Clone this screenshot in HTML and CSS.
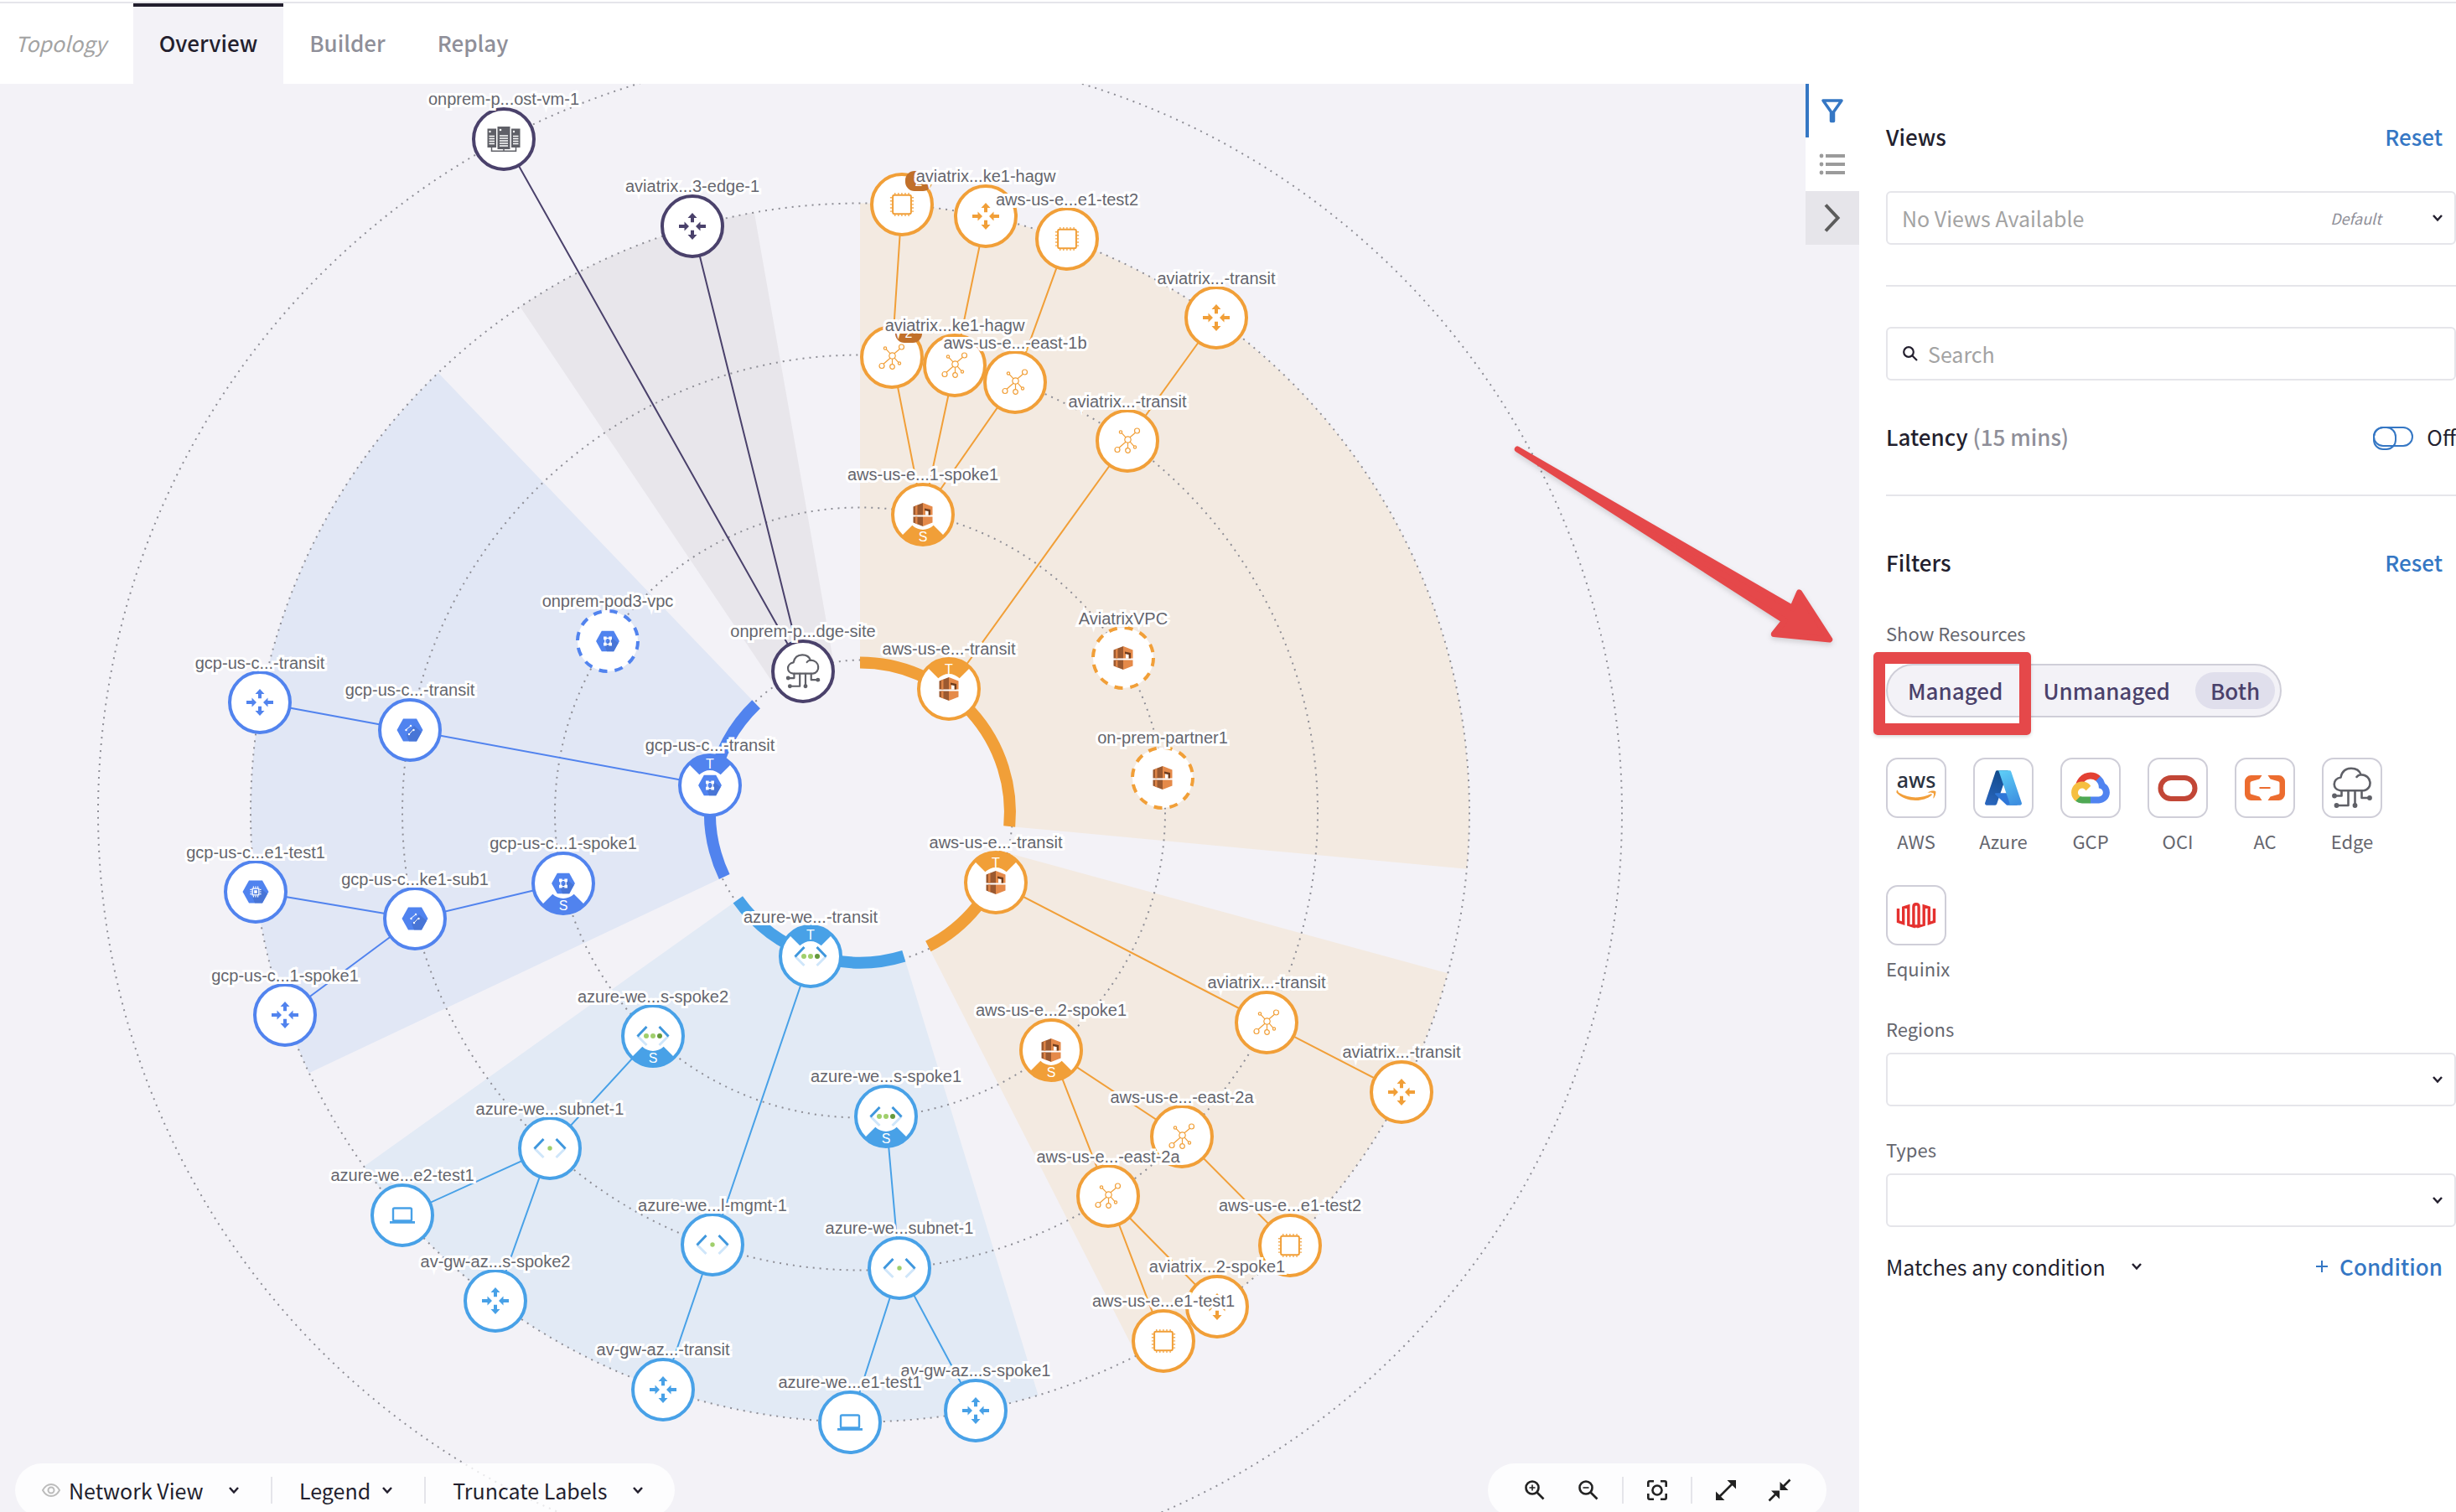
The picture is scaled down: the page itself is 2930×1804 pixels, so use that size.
FILE: index.html
```html
<!DOCTYPE html>
<html lang="en">
<head>
<meta charset="utf-8">
<meta name="viewport" content="width=device-width, initial-scale=1">
<title>Topology – Overview</title>
<link rel="stylesheet" href="styles.css">
</head>
<body>

<svg class="sprite" aria-hidden="true">
  <defs>
    <linearGradient id="az-dark" x1="0.6" y1="0" x2="0.3" y2="1"><stop offset="0" stop-color="#114a8b"/><stop offset="1" stop-color="#2a66bd"/></linearGradient>
    <linearGradient id="az-light" x1="0.3" y1="0" x2="0.7" y2="1"><stop offset="0" stop-color="#5ccbf6"/><stop offset="1" stop-color="#3d8fe0"/></linearGradient>
  </defs>
  <symbol id="gateway" viewBox="-20 -20 40 40">
    <path fill="currentColor" d="M0-16 5.500-10H2V-4.700H-2V-10H-5.500ZM0 16 5.500 10H2V4.700H-2V10H-5.500ZM-4 0-9.500-5.500V-2H-16V2H-9.500V5.500ZM4 0 9.500-5.500V-2H16V2H9.500V5.500Z"/>
  </symbol>
  <symbol id="chip" viewBox="-20 -20 40 40">
    <path fill="none" stroke="currentColor" stroke-width="2.600" stroke-dasharray="1.400 2.700" opacity=".85" d="M-9-12.800H9M-9 12.800H9M-12.800-9V9M12.800-9V9"/>
    <rect x="-10.900" y="-11.200" width="21.800" height="22.400" rx="2" fill="#fff" stroke="currentColor" stroke-width="2"/>
  </symbol>
  <symbol id="subnet" viewBox="-20 -20 40 40">
    <g fill="none" stroke="currentColor" stroke-width="1.200">
      <circle cx="0.500" cy="-1.500" r="3.700"/><circle cx="11.500" cy="-12" r="3"/><circle cx="-8" cy="-10.500" r="1.700"/>
      <circle cx="-12" cy="10.500" r="3"/><circle cx="0.500" cy="11.500" r="2.800"/><circle cx="9" cy="7.500" r="1.600"/>
      <path d="M3-4.200 9.500-9.800M-2-4.200-6.800-9.300M-2 1.200-10 8.300M.5 2.200V8.700M3.200 1.200 7.800 6.300"/>
    </g>
  </symbol>
  <symbol id="aws-vpc" viewBox="-20 -20 40 40">
    <path fill="#9b5930" d="M0-14V.5H-11.500V-9.500ZM-11.500 2.500H0V14L-11.500 9.500Z"/>
    <path fill="#dd8447" d="M-9-10.500-6.500-11.500V.5H-9ZM-9 2.500H-6.500V11.500L-9 10.500Z"/>
    <path fill="#e58a4a" d="M0-14 11.500-9.500V.5H0ZM0 2.500H11.500V9.500L0 14Z"/>
    <path fill="#6f3d1e" d="M2-7.500 9-6V.5H6.500V-3.500L2-5Z"/>
    <path fill="#fff" d="M3-4.500 6.500-4V.5H3Z"/>
  </symbol>
  <symbol id="hexagon" viewBox="-20 -20 40 40">
    <path fill="#5083ef" d="M-8-13.500H8L15.500 0 8 13.500H-8L-15.500 0Z"/>
    <path fill="#4672d0" opacity=".8" d="M5-5 14 2.500 8 13.500H-1L-4 6Z"/>
  </symbol>
  <symbol id="gcp-vpc" viewBox="-20 -20 40 40">
    <use href="#hexagon" x="-20" y="-20" width="40" height="40"/>
    <path fill="#fff" d="M-5.500-6H-1.500V-2H-5.500ZM1.500-6H5.500V-2H1.500ZM-5.500 2H-1.500V6H-5.500ZM1.500 2H5.500V6H1.500Z"/>
    <path fill="none" stroke="#fff" stroke-width="1.400" d="M-3.500-3V3M3.500-3V3M-2-4H2M-2 4H2"/>
  </symbol>
  <symbol id="gcp-subnet" viewBox="-20 -20 40 40">
    <use href="#hexagon" x="-20" y="-20" width="40" height="40"/>
    <g fill="none" stroke="#fff" stroke-width="1"><path d="M-4-1 .5-4.500M-.5 4.500 4-.5"/></g>
    <g fill="#fff"><circle cx="-4.500" cy="0" r="1.200"/><circle cx="1" cy="-5" r="1.200"/><circle cx="-1" cy="5" r="1.200"/><circle cx="4.500" cy="0" r="1.200"/></g>
  </symbol>
  <symbol id="gcp-vm" viewBox="-20 -20 40 40">
    <use href="#hexagon" x="-20" y="-20" width="40" height="40"/>
    <rect x="-3.800" y="-3.800" width="7.600" height="7.600" fill="none" stroke="#fff" stroke-width="1.300"/>
    <rect x="-1.800" y="-1.800" width="3.600" height="3.600" fill="#fff"/>
    <path fill="none" stroke="#fff" stroke-width="2" stroke-dasharray="1.200 1.400" d="M-3.200-5.600H3.500M-3.200 5.600H3.500M-5.600-3.200V3.500M5.600-3.200V3.500"/>
  </symbol>
  <symbol id="brackets" viewBox="-24 -20 48 40">
    <g fill="none" stroke-width="3"><path stroke="#cfe6fa" d="M-18.500 0-7.500 11M18.500 0 7.500 11"/><path stroke="#3f97dd" d="M-7.500-11-18.500.5M7.500-11 18.500.5"/></g>
  </symbol>
  <symbol id="az-vnet" viewBox="-24 -20 48 40">
    <use href="#brackets" x="-24" y="-20" width="48" height="40"/>
    <circle cx="-8" r="3" fill="#a0cf6c"/><circle r="3" fill="#a0cf6c"/><circle cx="8" r="3" fill="#66993d"/>
  </symbol>
  <symbol id="az-subnet" viewBox="-24 -20 48 40">
    <use href="#brackets" x="-24" y="-20" width="48" height="40"/>
    <circle r="2.700" fill="#a0cf6c"/>
  </symbol>
  <symbol id="laptop" viewBox="-20 -20 40 40">
    <rect x="-11" y="-8.500" width="22" height="15" rx="1.500" fill="none" stroke="currentColor" stroke-width="2.400"/>
    <path fill="currentColor" d="M-15 7H15V9.800H-15Z"/>
  </symbol>
  <symbol id="servers" viewBox="-24 -20 48 40">
    <path fill="#5f6067" d="M-19.500-12.500H-9V10H-19.500ZM-7.500-15H7.500V12H-7.500ZM9-12.500H19.500V10H9Z"/>
    <path fill="none" stroke="#fff" stroke-width="1.300" d="M-17.500-3.500H-11M-17.500-.5H-11M-17.500 2.500H-11M-17.500 5.500H-11M-5-4H5M-5-1H5M-5 2H5M-5 5H5M-5 8H5M11-3.500H17.500M11-.5H17.500M11 2.500H17.500M11 5.500H17.500"/>
    <path fill="none" stroke="#5f6067" stroke-width="1.500" d="M-14.500 10V14.200H14.500V10M0 12V14"/>
    <g fill="#fff"><circle cx="-16.500" cy="-9" r="1.200"/><circle cx="-4" cy="-11" r="1.300"/><circle cx="12" cy="-9" r="1.200"/></g>
  </symbol>
  <symbol id="edge-cloud" viewBox="-26 -26 52 52">
    <g fill="none" stroke="#5f6067" stroke-width="2.600" stroke-linejoin="round" stroke-linecap="round">
      <path d="M-14 3.200C-24 2-23.500-11-13.500-12.500-12-20-7-23.300-1-23.300 5-23.300 9-20.500 10.500-15.800 24-15.500 25 1.500 14 3.200ZM10.500-15.800C8.500-15.600 6.500-14.500 5.500-13"/>
      <path d="M-12.500 3.500V9.500H-20M-4.500 3.500V21H-18M3.500 3.500V20M11.500 3.500V12H20"/>
    </g>
    <g fill="#5f6067"><circle cx="-21" cy="9.500" r="2.900"/><circle cx="-18.500" cy="21" r="2.900"/><circle cx="3.500" cy="21" r="2.900"/><circle cx="21" cy="12" r="2.900"/></g>
  </symbol>
  <symbol id="role-t" viewBox="-40 -40 80 80">
    <path fill="currentColor" d="M-12.700-12.700A18 18 0 0 1 12.700-12.700L26-26A37 37 0 0 0-26-26Z"/>
  </symbol>
  <symbol id="role-s" viewBox="-40 -40 80 80">
    <path fill="currentColor" d="M-12.700 12.700A18 18 0 0 0 12.700 12.700L26 26A37 37 0 0 1-26 26Z"/>
  </symbol>
  <symbol id="chevron" viewBox="0 0 16 16"><path fill="none" stroke="currentColor" stroke-width="2.500" d="M3 5 8 10.500 13 5"/></symbol>
</svg>

<header class="topbar">
  <nav class="tabs" aria-label="Topology">
    <span class="tabs-title">Topology</span>
    <a class="tab tab-active" href="#overview" aria-current="page">Overview</a>
    <a class="tab" href="#builder">Builder</a>
    <a class="tab" href="#replay">Replay</a>
  </nav>
</header>

<div class="workspace">
<main class="canvas">
<svg class="graph" viewBox="0 100 2218 1704" preserveAspectRatio="xMinYMin meet" role="img" aria-label="Network topology">
  <!-- region wedges, centre 1026,969 -->
  <g transform="translate(1026 969.500)">
    <path class="zone-aws" d="M0-179V-727A727 727 0 0 1 723.900 67.200L178.200 16.500A179 179 0 0 0 0-179Z"/>
    <path class="zone-aws" d="M172.700 47.200 701.200 191.800A727 727 0 0 1 330 647.800L81.300 159.500A179 179 0 0 0 172.700 47.200Z"/>
    <path class="zone-azure" d="M52.300 171.200 212.600 695.200A727 727 0 0 1-591.900 422.200L-145.700 103.900A179 179 0 0 0 52.300 171.200Z"/>
    <path class="zone-gcp" d="M-161.800 76.500-657.300 310.700A727 727 0 0 1-503.200-524.700L-123.900-129.200A179 179 0 0 0-161.800 76.500Z"/>
    <path class="zone-edge" d="M-99.800-148.600-405.500-603.400A727 727 0 0 1-126.200-716L-31.100-176.300A179 179 0 0 0-99.800-148.600Z"/>
    <g class="rings"><circle r="182"/><circle r="364"/><circle r="546"/><circle r="727"/><circle r="909"/></g>
    <g class="arcs">
      <path class="aws" d="M0-179A179 179 0 0 1 178.200 16.500"/>
      <path class="aws" d="M172.700 47.200A179 179 0 0 1 81.300 159.500"/>
      <path class="azure" d="M52.300 171.200A179 179 0 0 1-145.700 103.900"/>
      <path class="gcp" d="M-161.800 76.500A179 179 0 0 1-123.900-129.200"/>
    </g>
  </g>

  <g class="links">
    <path class="edge" d="M601 166 958 801 826 270"/>
    <path class="aws" d="M1076 244 1064 426 1101 614 1139 436 1176 258M1101 614 1211 456 1273 285M1451 379 1345 526 1132 822"/>
    <path class="aws" d="M1188 1053 1511 1220 1672 1303M1254 1253 1410 1356 1539 1486M1254 1253 1322 1427 1388 1600M1322 1427 1452 1559"/>
    <path class="gcp" d="M310 838 489 871 847 937M305 1064 495 1096 672 1054M495 1096 340 1211"/>
    <path class="azure" d="M967 1141 850 1485 791 1658M779 1236 656 1370 480 1450M656 1370 591 1552M1057 1332 1073 1513 1014 1697M1073 1513 1164 1683"/>
  </g>

  <g class="nodes">
    <g class="edge" transform="translate(601 166)"><circle r="36"/><use href="#servers" x="-24" y="-20" width="48" height="40"/></g>
    <g class="edge" transform="translate(826 270)"><circle r="36"/><use href="#gateway" x="-20" y="-20" width="40" height="40"/></g>
    <g class="edge" transform="translate(958 801)"><circle r="36"/><use href="#edge-cloud" x="-22" y="-22" width="44" height="44"/></g>

    <g class="aws" transform="translate(1076 244)"><circle r="36"/><use href="#chip" x="-20" y="-20" width="40" height="40"/><rect class="count-bg" x="4" y="-40" width="32" height="24" rx="11"/><text class="count" x="20" y="-22">2</text></g>
    <g class="aws" transform="translate(1176 258)"><circle r="36"/><use href="#gateway" x="-20" y="-20" width="40" height="40"/></g>
    <g class="aws" transform="translate(1273 285)"><circle r="36"/><use href="#chip" x="-20" y="-20" width="40" height="40"/></g>
    <g class="aws" transform="translate(1451 379)"><circle r="36"/><use href="#gateway" x="-20" y="-20" width="40" height="40"/></g>
    <g class="aws" transform="translate(1064 426)"><circle r="36"/><use href="#subnet" x="-20" y="-20" width="40" height="40"/><rect class="count-bg" x="4" y="-41" width="32" height="24" rx="11"/><text class="count" x="20" y="-23">2</text></g>
    <g class="aws" transform="translate(1139 436)"><circle r="36"/><use href="#subnet" x="-20" y="-20" width="40" height="40"/></g>
    <g class="aws" transform="translate(1211 456)"><circle r="36"/><use href="#subnet" x="-20" y="-20" width="40" height="40"/></g>
    <g class="aws" transform="translate(1345 526)"><circle r="36"/><use href="#subnet" x="-20" y="-20" width="40" height="40"/></g>
    <g class="aws" transform="translate(1101 614)"><circle r="36"/><use href="#aws-vpc" x="-20" y="-20" width="40" height="40"/><use href="#role-s" x="-40" y="-40" width="80" height="80"/><text class="role" y="32">S</text></g>
    <g class="aws" transform="translate(1132 822)"><circle r="36"/><use href="#aws-vpc" x="-20" y="-20" width="40" height="40"/><use href="#role-t" x="-40" y="-40" width="80" height="80"/><text class="role" y="-18">T</text></g>
    <g class="aws unmanaged" transform="translate(1340 785)"><circle r="36"/><use href="#aws-vpc" x="-20" y="-20" width="40" height="40"/></g>
    <g class="aws unmanaged" transform="translate(1387 928)"><circle r="36"/><use href="#aws-vpc" x="-20" y="-20" width="40" height="40"/></g>
    <g class="aws" transform="translate(1188 1053)"><circle r="36"/><use href="#aws-vpc" x="-20" y="-20" width="40" height="40"/><use href="#role-t" x="-40" y="-40" width="80" height="80"/><text class="role" y="-18">T</text></g>
    <g class="aws" transform="translate(1511 1220)"><circle r="36"/><use href="#subnet" x="-20" y="-20" width="40" height="40"/></g>
    <g class="aws" transform="translate(1672 1303)"><circle r="36"/><use href="#gateway" x="-20" y="-20" width="40" height="40"/></g>
    <g class="aws" transform="translate(1254 1253)"><circle r="36"/><use href="#aws-vpc" x="-20" y="-20" width="40" height="40"/><use href="#role-s" x="-40" y="-40" width="80" height="80"/><text class="role" y="32">S</text></g>
    <g class="aws" transform="translate(1410 1356)"><circle r="36"/><use href="#subnet" x="-20" y="-20" width="40" height="40"/></g>
    <g class="aws" transform="translate(1322 1427)"><circle r="36"/><use href="#subnet" x="-20" y="-20" width="40" height="40"/></g>
    <g class="aws" transform="translate(1539 1486)"><circle r="36"/><use href="#chip" x="-20" y="-20" width="40" height="40"/></g>
    <g class="aws" transform="translate(1452 1559)"><circle r="36"/><use href="#gateway" x="-20" y="-20" width="40" height="40"/></g>
    <g class="aws" transform="translate(1388 1600)"><circle r="36"/><use href="#chip" x="-20" y="-20" width="40" height="40"/></g>

    <g class="gcp unmanaged" transform="translate(725 765)"><circle r="36"/><use href="#gcp-vpc" x="-18" y="-18" width="36" height="36"/></g>
    <g class="gcp" transform="translate(310 838)"><circle r="36"/><use href="#gateway" x="-20" y="-20" width="40" height="40"/></g>
    <g class="gcp" transform="translate(489 871)"><circle r="36"/><use href="#gcp-subnet" x="-20" y="-20" width="40" height="40"/></g>
    <g class="gcp" transform="translate(847 937)"><circle r="36"/><use href="#gcp-vpc" x="-18" y="-18" width="36" height="36"/><use href="#role-t" x="-40" y="-40" width="80" height="80"/><text class="role" y="-20">T</text></g>
    <g class="gcp" transform="translate(305 1064)"><circle r="36"/><use href="#gcp-vm" x="-20" y="-20" width="40" height="40"/></g>
    <g class="gcp" transform="translate(495 1096)"><circle r="36"/><use href="#gcp-subnet" x="-20" y="-20" width="40" height="40"/></g>
    <g class="gcp" transform="translate(672 1054)"><circle r="36"/><use href="#gcp-vpc" x="-18" y="-18" width="36" height="36"/><use href="#role-s" x="-40" y="-40" width="80" height="80"/><text class="role" y="32">S</text></g>
    <g class="gcp" transform="translate(340 1211)"><circle r="36"/><use href="#gateway" x="-20" y="-20" width="40" height="40"/></g>

    <g class="azure" transform="translate(967 1141)"><circle r="36"/><use href="#az-vnet" x="-24" y="-20" width="48" height="40"/><use href="#role-t" x="-40" y="-40" width="80" height="80"/><text class="role" y="-20">T</text></g>
    <g class="azure" transform="translate(779 1236)"><circle r="36"/><use href="#az-vnet" x="-24" y="-20" width="48" height="40"/><use href="#role-s" x="-40" y="-40" width="80" height="80"/><text class="role" y="32">S</text></g>
    <g class="azure" transform="translate(1057 1332)"><circle r="36"/><use href="#az-vnet" x="-24" y="-20" width="48" height="40"/><use href="#role-s" x="-40" y="-40" width="80" height="80"/><text class="role" y="32">S</text></g>
    <g class="azure" transform="translate(656 1370)"><circle r="36"/><use href="#az-subnet" x="-24" y="-20" width="48" height="40"/></g>
    <g class="azure" transform="translate(480 1450)"><circle r="36"/><use href="#laptop" x="-20" y="-20" width="40" height="40"/></g>
    <g class="azure" transform="translate(591 1552)"><circle r="36"/><use href="#gateway" x="-20" y="-20" width="40" height="40"/></g>
    <g class="azure" transform="translate(850 1485)"><circle r="36"/><use href="#az-subnet" x="-24" y="-20" width="48" height="40"/></g>
    <g class="azure" transform="translate(791 1658)"><circle r="36"/><use href="#gateway" x="-20" y="-20" width="40" height="40"/></g>
    <g class="azure" transform="translate(1073 1513)"><circle r="36"/><use href="#az-subnet" x="-24" y="-20" width="48" height="40"/></g>
    <g class="azure" transform="translate(1014 1697)"><circle r="36"/><use href="#laptop" x="-20" y="-20" width="40" height="40"/></g>
    <g class="azure" transform="translate(1164 1683)"><circle r="36"/><use href="#gateway" x="-20" y="-20" width="40" height="40"/></g>
  </g>

  <g class="labels">
    <text x="601" y="125">onprem-p...ost-vm-1</text>
    <text x="826" y="229">aviatrix...3-edge-1</text>
    <text x="958" y="760">onprem-p...dge-site</text>
    <text x="1176" y="217">aviatrix...ke1-hagw</text>
    <text x="1273" y="245">aws-us-e...e1-test2</text>
    <text x="1451" y="339">aviatrix...-transit</text>
    <text x="1139" y="395">aviatrix...ke1-hagw</text>
    <text x="1211" y="416">aws-us-e...-east-1b</text>
    <text x="1345" y="486">aviatrix...-transit</text>
    <text x="1101" y="573">aws-us-e...1-spoke1</text>
    <text x="1132" y="781">aws-us-e...-transit</text>
    <text x="1340" y="745">AviatrixVPC</text>
    <text x="1387" y="887">on-prem-partner1</text>
    <text x="1188" y="1012">aws-us-e...-transit</text>
    <text x="1511" y="1179">aviatrix...-transit</text>
    <text x="1672" y="1262">aviatrix...-transit</text>
    <text x="1254" y="1212">aws-us-e...2-spoke1</text>
    <text x="1410" y="1316">aws-us-e...-east-2a</text>
    <text x="1322" y="1387">aws-us-e...-east-2a</text>
    <text x="1539" y="1445">aws-us-e...e1-test2</text>
    <text x="1452" y="1518">aviatrix...2-spoke1</text>
    <text x="1388" y="1559">aws-us-e...e1-test1</text>
    <text x="725" y="724">onprem-pod3-vpc</text>
    <text x="310" y="798">gcp-us-c...-transit</text>
    <text x="489" y="830">gcp-us-c...-transit</text>
    <text x="847" y="896">gcp-us-c...-transit</text>
    <text x="305" y="1024">gcp-us-c...e1-test1</text>
    <text x="495" y="1056">gcp-us-c...ke1-sub1</text>
    <text x="672" y="1013">gcp-us-c...1-spoke1</text>
    <text x="340" y="1171">gcp-us-c...1-spoke1</text>
    <text x="967" y="1101">azure-we...-transit</text>
    <text x="779" y="1196">azure-we...s-spoke2</text>
    <text x="1057" y="1291">azure-we...s-spoke1</text>
    <text x="656" y="1330">azure-we...subnet-1</text>
    <text x="480" y="1409">azure-we...e2-test1</text>
    <text x="591" y="1512">av-gw-az...s-spoke2</text>
    <text x="850" y="1445">azure-we...l-mgmt-1</text>
    <text x="791" y="1617">av-gw-az...-transit</text>
    <text x="1073" y="1472">azure-we...subnet-1</text>
    <text x="1164" y="1642">av-gw-az...s-spoke1</text>
    <text x="1014" y="1656">azure-we...e1-test1</text>
  </g>

  <path class="callout-arrow" d="M1810.300 536 2138.500 725.500 2146.500 707 2182.700 763 2116.300 756.500 2129 740.500Z"/>
</svg>

<div class="dock dock-left">
  <label class="dock-select">
    <svg class="eye" viewBox="0 0 22 22" aria-hidden="true"><g fill="none" stroke="currentColor" stroke-width="2"><path d="M1 11C4 5.500 7.500 4 11 4S18 5.500 21 11C18 16.500 14.500 18 11 18S4 16.500 1 11Z"/><circle cx="11" cy="11" r="3.500"/></g></svg>
    <select aria-label="View type"><option>Network View</option></select>
    <svg class="chevron"><use href="#chevron"/></svg>
  </label>
  <button class="dock-menu dock-menu-tight" type="button" aria-haspopup="menu">Legend<svg class="chevron"><use href="#chevron"/></svg></button>
  <button class="dock-menu" type="button" aria-haspopup="menu">Truncate Labels<svg class="chevron"><use href="#chevron"/></svg></button>
</div>

<div class="dock dock-right">
  <div class="dock-group">
    <button type="button" aria-label="Zoom in"><svg viewBox="0 0 24 24"><g fill="none" stroke="currentColor" stroke-width="2.600"><circle cx="9" cy="9" r="7.500"/><path d="M14.500 14.500 22.500 22.500"/><path stroke-width="1.600" d="M9 5.500V12.500M5.500 9H12.500"/></g></svg></button>
    <button type="button" aria-label="Zoom out"><svg viewBox="0 0 24 24"><g fill="none" stroke="currentColor" stroke-width="2.600"><circle cx="9" cy="9" r="7.500"/><path d="M14.500 14.500 22.500 22.500"/><path stroke-width="1.600" d="M5.500 9H12.500"/></g></svg></button>
  </div>
  <div class="dock-group">
    <button type="button" aria-label="Fit to screen"><svg viewBox="0 0 24 24"><g fill="none" stroke="currentColor" stroke-width="2.600"><circle cx="12" cy="12" r="5.500"/><path d="M1.300 8V3Q1.300 1.300 3 1.300H8M16 1.300H21Q22.700 1.300 22.700 3V8M22.700 16V21Q22.700 22.700 21 22.700H16M8 22.700H3Q1.300 22.700 1.300 21V16"/></g></svg></button>
  </div>
  <div class="dock-group">
    <button type="button" aria-label="Expand all"><svg viewBox="0 0 24 24"><path fill="currentColor" d="M13.500 0H24V10.500ZM0 13.500 10.500 24H0Z"/><path stroke="currentColor" stroke-width="2.600" d="M4 20 20 4"/></svg></button>
    <button type="button" aria-label="Collapse all"><svg viewBox="0 0 24 24"><path fill="currentColor" d="M12.500 2V12H22.500ZM2 12.500H12V22.500Z"/><path stroke="currentColor" stroke-width="2.600" d="M14 10 24.500-.5M10 14-.5 24.500"/></svg></button>
  </div>
</div>

<div class="rail">
  <button class="rail-filter" type="button" aria-label="Filters"><svg viewBox="0 0 32 32"><path fill="none" stroke="currentColor" stroke-width="3.500" stroke-linejoin="round" d="M5 4H27L17.500 17.500V28.500H14.500V17.500Z"/></svg></button>
  <button class="rail-list" type="button" aria-label="List"><svg viewBox="0 0 32 32"><g fill="currentColor"><circle cx="3" cy="6" r="2.400"/><circle cx="3" cy="16" r="2.400"/><circle cx="3" cy="26" r="2.400"/><path d="M8 4H31V8H8ZM8 14H31V18H8ZM8 24H31V28H8Z"/></g></svg></button>
  <button class="rail-collapse" type="button" aria-label="Collapse panel"><svg viewBox="0 0 32 36"><path fill="none" stroke="currentColor" stroke-width="4" d="M8 2.500 22.500 18 8 33.500"/></svg></button>
</div>
</main>

<aside class="panel">
  <section class="panel-section panel-views">
    <div class="panel-head"><h2>Views</h2><button class="link-btn" type="button">Reset</button></div>
    <div class="select-box views-box">
      <select class="placeholder" aria-label="Views"><option>No Views Available</option></select>
      <span class="default-tag">Default</span>
      <svg class="chevron"><use href="#chevron"/></svg>
    </div>
  </section>

  <section class="panel-section">
    <div class="search-box">
      <svg viewBox="0 0 20 20" aria-hidden="true"><g fill="none" stroke="currentColor" stroke-width="2.200"><circle cx="8" cy="8" r="5.800"/><path d="M12 12 18 18"/></g></svg>
      <input type="search" placeholder="Search" aria-label="Search">
    </div>
    <div class="latency">
      <h2>Latency <span>(15 mins)</span></h2>
      <label class="switch"><input type="checkbox" role="switch" aria-label="Latency">Off</label>
    </div>
  </section>

  <section class="panel-section panel-filters">
    <div class="panel-head"><h2>Filters</h2><button class="link-btn" type="button">Reset</button></div>
    <fieldset class="resources">
      <legend>Show Resources</legend>
      <div class="segments">
        <label class="segment segment-marked"><input type="radio" name="res">Managed</label>
        <label class="segment"><input type="radio" name="res">Unmanaged</label>
        <label class="segment"><input type="radio" name="res" checked>Both</label>
      </div>
    </fieldset>

    <div class="clouds">
      <button class="cloud" type="button"><span class="cloud-box"><svg viewBox="-24 -24 48 48"><text class="aws-word" x="0" y="0">aws</text><path fill="#f29f3a" d="M-23.500 4.500Q-23-.0-21 5.500C-8 13.500 7 12.500 17 7.500 19 6.700 19.500 8 18 9.200 8 17-12 18-23.500 5.800ZM13.500 5.500C17 3 22 3 23.300 4.200 23.800 6 22.500 11 20.500 12.700 20 11.800 21.500 8.500 20.800 6.500 19 5.700 15 6.300 13.500 5.500Z"/></svg></span>AWS</button>
      <button class="cloud" type="button"><span class="cloud-box"><svg viewBox="0 0 96 96"><path fill="url(#az-dark)" d="M33.338 6.544h26.038l-27.030 80.087a4.152 4.152 0 0 1-3.933 2.824H8.149a4.145 4.145 0 0 1-3.928-5.470L29.404 9.368a4.152 4.152 0 0 1 3.934-2.825z"/><path fill="#2f77d8" d="M71.175 60.261H29.879a1.911 1.911 0 0 0-1.305 3.309l26.534 24.764a4.171 4.171 0 0 0 2.846 1.121h23.380z"/><path fill="url(#az-light)" d="M66.595 9.364a4.145 4.145 0 0 0-3.928-2.820H33.648a4.146 4.146 0 0 1 3.928 2.820l25.184 74.620a4.146 4.146 0 0 1-3.928 5.472h29.020a4.146 4.146 0 0 0 3.927-5.472z"/></svg></span>Azure</button>
      <button class="cloud" type="button"><span class="cloud-box"><svg viewBox="-6 -31 268 268"><path fill="#e34133" d="m170.252 56.819 22.253-22.253 1.483-9.370C153.437-11.677 88.976-7.496 52.420 33.920 42.267 45.423 34.734 59.764 30.717 74.573l7.970-1.123 44.505-7.340 3.436-3.513c19.797-21.742 53.270-24.667 76.128-6.168z"/><path fill="#5083f0" d="M224.205 73.918a100.249 100.249 0 0 0-30.217-48.722l-31.232 31.232a55.515 55.515 0 0 1 20.379 44.037v5.544c15.350 0 27.797 12.445 27.797 27.796 0 15.352-12.446 27.485-27.797 27.485h-55.671l-5.466 5.934v33.340l5.466 5.231h55.670c39.930.311 72.553-31.494 72.864-71.424a72.303 72.303 0 0 0-31.793-60.453"/><path fill="#4fa854" d="M71.870 205.796h55.593V161.290H71.870a27.275 27.275 0 0 1-11.400-2.500l-7.887 2.420-22.409 22.253-1.952 7.574a72.303 72.303 0 0 0 43.648 14.759"/><path fill="#f6bf41" d="M71.870 61.425C31.940 61.664-.237 94.228.001 134.158a72.300 72.300 0 0 0 28.222 56.880l32.248-32.246c-13.990-6.322-20.208-22.786-13.887-36.776 6.322-13.990 22.786-20.208 36.775-13.888a27.796 27.796 0 0 1 13.887 13.888l32.248-32.248A72.224 72.224 0 0 0 71.870 61.425"/></svg></span>GCP</button>
      <button class="cloud" type="button"><span class="cloud-box"><svg viewBox="-24 -24 48 48"><rect x="-20.500" y="-12" width="41" height="25" rx="12.500" fill="none" stroke="#c24636" stroke-width="6"/></svg></span>OCI</button>
      <button class="cloud" type="button"><span class="cloud-box"><svg viewBox="-24 -24 48 48"><path id="bracket" fill="#ec6c2f" d="M-3.500-15H-16.500A7.500 7.500 0 0 0-24-7.500V7.500A7.500 7.500 0 0 0-16.500 15H-3.500L-6.500 10.500-16 7.800A2 2 0 0 1-17.500 6V-6A2 2 0 0 1-16-7.800L-6.500-10.500Z"/><use href="#bracket" transform="scale(-1 1)"/><path stroke="#ec6c2f" stroke-width="2" d="M-6.500 0H6.500"/></svg></span>AC</button>
      <button class="cloud" type="button"><span class="cloud-box"><svg class="wide" viewBox="-26 -26 52 52"><use href="#edge-cloud" x="-26" y="-26" width="52" height="52"/></svg></span>Edge</button>
      <button class="cloud" type="button"><span class="cloud-box"><svg viewBox="-24 -24 48 48"><path fill="none" stroke="#e5312f" stroke-width="3.400" d="M-21.500-8V7.500L-15.300 9.700V-9L-9.200-11V11.300L-3.100 13.200V-10Q-3.100-13.200 0-13.200T3.100-10V13.200L9.200 11.300V-11L15.300-9V9.700L21.500 7.500V-8M-3.100 13H3.100"/></svg></span>Equinix</button>
    </div>

    <label class="field regions"><span>Regions</span>
      <span class="select-box"><select><option></option></select><svg class="chevron"><use href="#chevron"/></svg></span>
    </label>
    <label class="field"><span>Types</span>
      <span class="select-box"><select><option></option></select><svg class="chevron"><use href="#chevron"/></svg></span>
    </label>

    <div class="conditions">
      <label class="match-select"><select aria-label="Match mode"><option>Matches any condition</option></select><svg class="chevron"><use href="#chevron"/></svg></label>
      <button class="link-btn add-condition" type="button"><svg viewBox="0 0 16 16"><path stroke="currentColor" stroke-width="2" d="M8 1V15M1 8H15"/></svg>Condition</button>
    </div>
  </section>
</aside>
</div>
</body>
</html>
```
FILE: styles.css
```css
:root {
  --ink: #231f2e;
  --muted: #8f8f99;
  --label: #65666e;
  --line: #e5e5ea;
  --blue: #3577c4;
  --canvas: #f3f2f7;
  --purple: #4a416b;
  --orange: #f19f38;
  --gcp: #5183ee;
  --azure: #48a1e7;
  --red: #e5484a;
}

* { box-sizing: border-box; }

body {
  margin: 0;
  min-height: 100vh;
  display: flex;
  flex-direction: column;
  font-family: "Noto Sans CJK SC", "Noto Sans", sans-serif;
  font-size: 25px;
  line-height: 36px;
  color: var(--ink);
  background: #fff;
}

button, input, select {
  font: inherit;
  color: inherit;
  margin: 0;
  padding: 0;
  border: 0;
  background: none;
}
select { appearance: none; }
h2 { margin: 0; font-size: 26px; font-weight: 500; }
svg { display: block; }
.sprite { position: absolute; width: 0; height: 0; }
.chevron { width: 16px; height: 16px; flex: none; pointer-events: none; }

/* top tabs */
.topbar { margin-top: 2px; border-top: 2px solid var(--line); }
.tabs { display: flex; height: 96px; }
.tabs-title {
  padding: 0 32px 0 18px;
  line-height: 94px;
  font-style: italic;
  color: #a3a3a3;
}
.tab {
  padding: 0 31px;
  border-top: 4px solid transparent;
  line-height: 86px;
  font-size: 26px;
  font-weight: 500;
  color: var(--muted);
  text-decoration: none;
}
.tab-active { border-color: var(--ink); background: var(--canvas); color: var(--ink); }

.workspace { flex: 1; display: flex; }
.canvas {
  position: relative;
  flex: 1;
  min-width: 0;
  overflow: hidden;
  background: var(--canvas);
}

/* graph */
.graph { width: 100%; height: auto; }
.zone-aws { fill: #f3eae1; }
.zone-azure { fill: #e2eaf5; }
.zone-gcp { fill: #e1e7f5; }
.zone-edge { fill: #e8e6eb; }
.rings circle { fill: none; stroke: #8e8e96; stroke-width: 2; stroke-dasharray: 2 6; }
.arcs path { fill: none; stroke: currentColor; stroke-width: 14; }
.links path { fill: none; stroke: currentColor; stroke-width: 2; }
.graph .aws { color: var(--orange); }
.graph .gcp { color: var(--gcp); }
.graph .azure { color: var(--azure); }
.graph .edge { color: var(--purple); }
.nodes g > circle { fill: #fff; stroke: currentColor; stroke-width: 4; }
.nodes .unmanaged > circle { stroke-dasharray: 10 9; }
.role, .count {
  font-family: "Liberation Sans", Arial, sans-serif;
  font-size: 16px;
  fill: #fff;
  text-anchor: middle;
}
.count-bg { fill: #c1702a; }
.labels text {
  font-family: "Liberation Sans", Arial, sans-serif;
  font-size: 20px;
  fill: #65666e;
  stroke: #fff;
  stroke-width: 6;
  paint-order: stroke;
  text-anchor: middle;
}
.callout-arrow {
  fill: var(--red);
  stroke: var(--red);
  stroke-width: 7;
  stroke-linejoin: round;
  filter: drop-shadow(0 3px 3px rgba(0, 0, 0, .15));
}

/* floating toolbars */
.dock {
  position: absolute;
  bottom: -6px;
  display: flex;
  align-items: center;
  height: 64px;
  border-radius: 32px;
  background: rgba(255, 255, 255, .8);
}
.dock-left { left: 18px; padding: 0 36px 0 32px; }
.dock-right { right: 39px; padding: 0 16px; }
.dock-select { display: flex; align-items: center; padding-right: 36px; }
.dock-select select { margin: 0 28px 0 10px; }
.eye { width: 22px; height: 22px; color: #bcbcbc; }
.dock-menu {
  display: flex;
  align-items: center;
  gap: 29px;
  height: 32px;
  padding: 0 0 0 32px;
  border-left: 2px solid var(--line);
}
.dock-menu-tight { gap: 12px; padding-right: 36px; }
.dock-group { display: flex; gap: 16px; padding: 0 16px; height: 32px; }
.dock-group + .dock-group { border-left: 2px solid var(--line); }
.dock-group button {
  display: grid;
  place-items: center;
  width: 48px;
  height: 32px;
}
.dock-group svg { width: 24px; height: 24px; overflow: visible; color: #222; }

/* rail at the panel's edge */
.rail { position: absolute; top: 0; right: 0; width: 64px; background: #fff; }
.rail button {
  display: grid;
  place-items: center;
  width: 64px;
  height: 64px;
}
.rail svg { width: 32px; height: 32px; }
.rail .rail-filter { border-left: 4px solid var(--blue); color: var(--blue); }
.rail-filter svg { margin-right: 4px; }
.rail-list { color: #9b9b9b; }
.rail .rail-collapse { background: #e6e5ea; color: #5c5c5c; }
.rail .rail-collapse svg { height: 36px; }

/* side panel */
.panel { flex: 0 0 712px; padding-left: 32px; overflow: hidden; background: #fff; }
.panel-section { padding: 48px 0; }
.panel-section + .panel-section { border-top: 2px solid var(--line); }
.panel-views { padding-top: 45px; }
.panel-head {
  display: flex;
  justify-content: space-between;
  padding-right: 16px;
}
.link-btn { font-size: 26px; font-weight: 500; color: var(--blue); }

.select-box, .search-box {
  position: relative;
  display: flex;
  align-items: center;
  height: 64px;
  border: 2px solid var(--line);
  border-radius: 6px;
  background: #fff;
}
.select-box select { width: 100%; height: 60px; padding: 0 17px; }
.select-box .chevron { position: absolute; right: 12px; }
.views-box { margin-top: 47px; }
.placeholder { color: #a3a3a3; }
.default-tag {
  position: absolute;
  right: 87px;
  font-size: 18px;
  font-style: italic;
  color: var(--muted);
  pointer-events: none;
}
.search-box { gap: 11px; padding-left: 17px; }
.search-box svg { width: 20px; height: 20px; }
.search-box input { flex: 1; height: 60px; outline: 0; }
.search-box input::placeholder { color: #a3a3a3; opacity: 1; }

.latency { display: flex; justify-content: space-between; margin: 49px 0 3px; }
.latency h2 span { color: var(--muted); }
.switch { display: flex; align-items: center; gap: 16px; }
.switch input {
  appearance: none;
  width: 48px;
  height: 24px;
  border: 2px solid var(--blue);
  border-radius: 12px;
}
.switch input::before {
  content: "";
  display: block;
  width: 24px;
  height: 24px;
  margin: -2px;
  border: 2px solid var(--blue);
  border-radius: 12px;
}

.panel-section.panel-filters { padding-top: 61px; }
.resources { margin: 50px 0 0; padding: 0; border: 0; min-width: 0; }
.resources legend {
  padding: 0;
  margin-bottom: 21px;
  font-size: 22px;
  line-height: 32px;
  color: var(--label);
}
.segments {
  display: inline-flex;
  align-items: center;
  height: 64px;
  padding: 0 6px;
  border: 2px solid #cfced8;
  border-radius: 32px;
  background: var(--canvas);
  vertical-align: top;
}
.segment {
  position: relative;
  padding: 0 18px;
  border-radius: 22px;
  line-height: 44px;
  font-size: 26px;
  font-weight: 500;
  color: var(--purple);
}
.segment + .segment { margin-left: 12px; }
.segment input { position: absolute; appearance: none; }
.segment:has(:checked) { background: #e0dfec; }
.segment-marked::after {
  content: "";
  position: absolute;
  inset: -24px -16px -31px -23px;
  border: 14px solid var(--red);
  border-radius: 5px;
  box-shadow: 0 2px 4px rgba(0, 0, 0, .15);
}

.clouds {
  display: grid;
  grid-template-columns: repeat(6, 72px);
  gap: 37px 32px;
  margin-top: 48px;
}
.cloud {
  display: flex;
  flex-direction: column;
  align-items: safe center;
  gap: 11px;
  font-size: 22px;
  line-height: 32px;
  color: var(--label);
}
.cloud-box {
  display: grid;
  place-items: center;
  width: 72px;
  height: 72px;
  border: 2px solid #cfced8;
  border-radius: 14px;
}
.cloud-box svg { width: 48px; height: 48px; overflow: visible; }
.cloud-box .wide { width: 52px; height: 52px; }
.aws-word {
  font-family: "Noto Sans", "Open Sans", sans-serif;
  font-size: 25px;
  font-weight: 500;
  fill: #2a3240;
  text-anchor: middle;
}

.field { display: block; margin-top: 35px; font-size: 22px; line-height: 32px; color: var(--label); }
.field > span { display: flex; }
.field .select-box { margin-top: 13px; color: var(--ink); }
.regions { margin-top: 40px; }

.conditions {
  display: flex;
  justify-content: space-between;
  margin-top: 29px;
  padding-right: 16px;
}
.match-select { display: flex; align-items: center; gap: 29px; }
.add-condition { display: flex; align-items: center; gap: 13px; }
.add-condition svg { width: 16px; height: 16px; }
```
